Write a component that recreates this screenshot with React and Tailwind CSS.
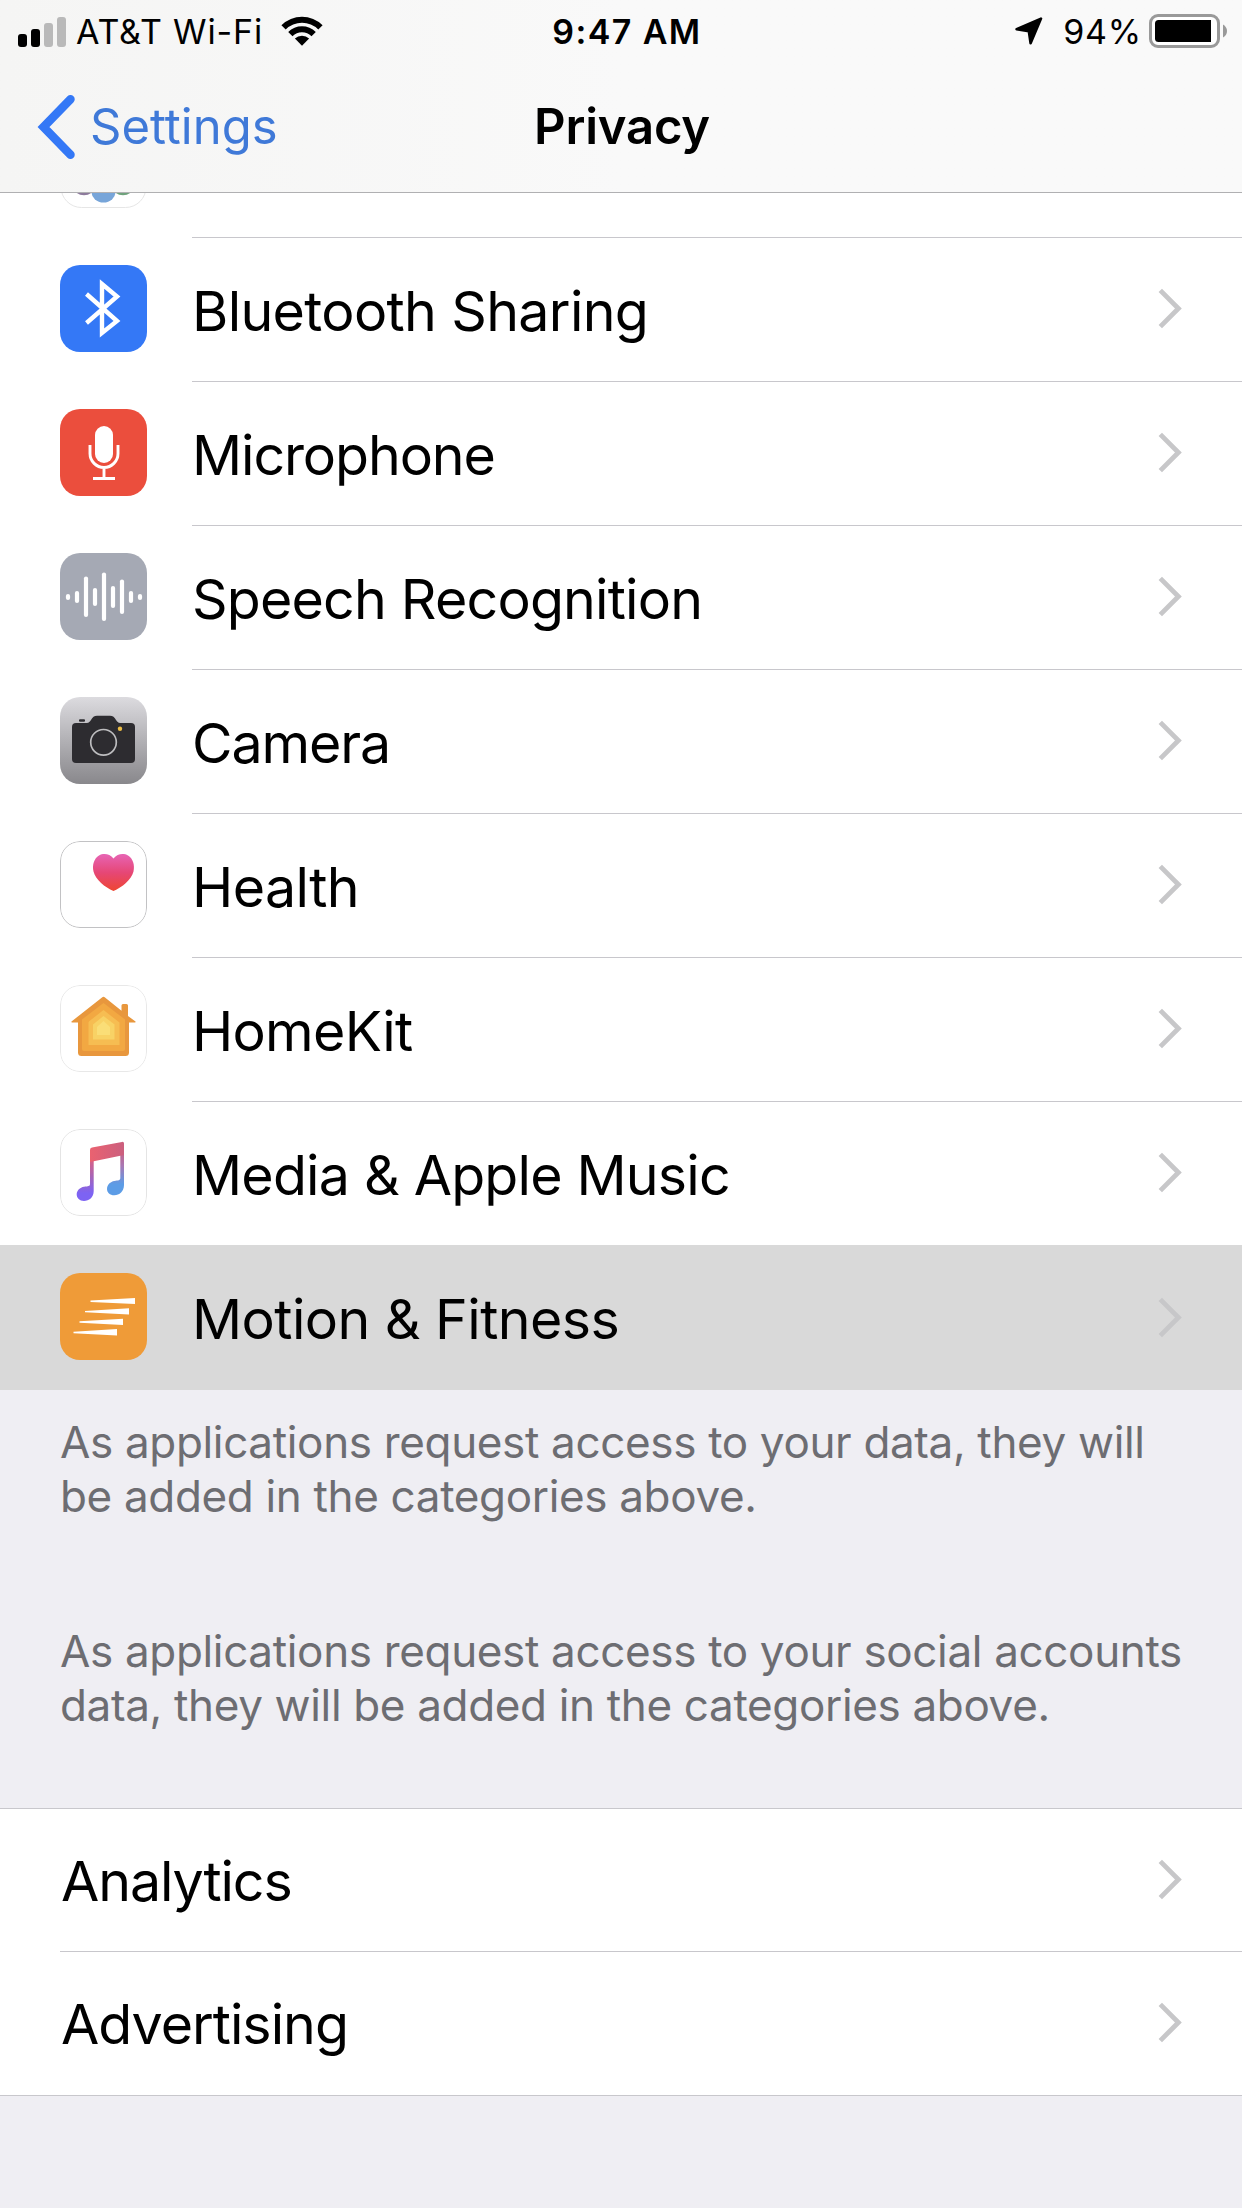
function SignalIcon() {
  return (
    <svg width="48" height="32" viewBox="0 0 48 32" className="shrink-0">
      <rect x="0" y="18" width="9" height="13" rx="3" fill="#000" />
      <rect x="13" y="13" width="9" height="18" rx="3" fill="#000" />
      <rect x="26" y="7" width="9" height="24" rx="3" fill="#b9b9b9" />
      <rect x="39" y="1" width="9" height="30" rx="3" fill="#b9b9b9" />
    </svg>
  );
}

function WifiIcon() {
  return (
    <svg width="42" height="30" viewBox="0 0 42 30" className="shrink-0">
      <path d="M0.4 9.2 A29.4 29.4 0 0 1 41.6 9.2 L37.3 13.4 A23.4 23.4 0 0 0 4.7 13.4 Z" />
      <path d="M7.2 16 A19.6 19.6 0 0 1 34.8 16 L30.5 20.2 A13.6 13.6 0 0 0 11.5 20.2 Z" />
      <path d="M13.9 22.6 A10.2 10.2 0 0 1 28.1 22.6 L21 29.8 Z" />
    </svg>
  );
}

function LocationIcon() {
  return (
    <svg width="28" height="28" viewBox="0 0 28 28" className="shrink-0">
      <path
        d="M26 1.6 L1.6 12.2 L13.8 14.1 L15.6 26.2 Z"
        fill="#000"
        stroke="#000"
        strokeWidth="2.6"
        strokeLinejoin="round"
      />
    </svg>
  );
}

function BatteryIcon() {
  return (
    <svg width="79" height="34" viewBox="0 0 79 34" className="shrink-0">
      <rect x="1.5" y="1.5" width="68" height="31" rx="7.5" fill="#fff" stroke="#999" strokeWidth="3" />
      <path d="M9.5 6 H62 V28 H9.5 A3.5 3.5 0 0 1 6 24.5 V9.500 A3.500 3.500 0 0 1 9.500 6 Z" />
      <path d="M74 10.500 Q78 13 78 17 Q78 21 74 23.500 Z" fill="#999" />
    </svg>
  );
}

function Chevron({ color }) {
  return (
    <svg width="25" height="41" viewBox="0 0 25 41" className="mr-[59px] mb-0.5 shrink-0">
      <path d="M2.300 2.400 L20.400 20.500 L2.300 38.600" fill="none" stroke={color} strokeWidth="4.800" />
    </svg>
  );
}

function Tile({ children, className }) {
  return (
    <div className={"mt-[27px] ml-[60px] size-[87px] shrink-0 self-start overflow-hidden rounded-[20px] " + className}>
      <svg width="87" height="87" viewBox="0 0 87 87">
        {children}
      </svg>
    </div>
  );
}

function PhotosPeek() {
  return (
    <svg width="87" height="16" viewBox="0 0 87 16">
      <path d="M1 -6 A20.500 20.500 0 0 0 21.500 14.500 H65.500 A20.500 20.500 0 0 0 86 -6" fill="#fff" stroke="#e6e6e6" />
      <circle cx="24" cy="-10" r="12.300" fill="#8d7a9c" />
      <circle cx="63" cy="-10" r="12.300" fill="#6fa27c" />
      <path d="M31.500 -4 V-1 A12 10.500 0 0 0 55.500 -1 V-4 Z" fill="#77a5d9" />
    </svg>
  );
}

function BluetoothTile() {
  return (
    <Tile className="bg-[#3478f6]">
      <path
        d="M26.500 29 L57 56 L42 68 V19 L57 31.500 L26.500 58"
        fill="none"
        stroke="#fff"
        strokeWidth="4.400"
        strokeMiterlimit="8"
      />
    </Tile>
  );
}

function MicrophoneTile() {
  return (
    <Tile className="bg-[#eb4e3d]">
      <rect x="35" y="17" width="18" height="37" rx="9" fill="#fff" />
      <path d="M30 36 V44.500 A14 14 0 0 0 58 44.500 V36 M44 58.500 V69.500" fill="none" stroke="#fff" strokeWidth="2.900" />
      <rect x="33" y="68" width="22" height="3" fill="#fff" />
    </Tile>
  );
}

const WAVE_BARS = [
  [8, 41, 47],
  [17, 38, 50],
  [26, 23.5, 64],
  [35, 35, 53],
  [44, 19.5, 68],
  [53, 33, 55],
  [62, 26.5, 61],
  [71, 38, 50],
  [80, 41, 47],
];

function SpeechTile() {
  return (
    <Tile className="bg-[#a5a9b4]">
      {WAVE_BARS.map(([x, top, bottom]) => (
        <rect key={x} x={x - 2.1} y={top} width="4.200" height={bottom - top} rx="2.100" fill="#fff" />
      ))}
    </Tile>
  );
}

function CameraTile() {
  return (
    <Tile className="bg-linear-to-b from-[#dcdbdf] to-[#89888c]">
      <rect x="12" y="26" width="63" height="40" rx="4" fill="#2d2c30" />
      <path
        d="M25 26.500 Q29.500 26 31 23 Q33 18.700 37 18.700 H50 Q54 18.700 56 23 Q57.500 26 62 26.500 V30 H25 Z"
        fill="#2d2c30"
      />
      <rect x="19" y="22.200" width="6" height="2.600" rx="1" fill="#2d2c30" />
      <circle cx="43.500" cy="45.300" r="12.800" fill="none" stroke="#bdbdbf" strokeWidth="1.700" />
      <circle cx="60" cy="31.800" r="2.200" fill="#edbd45" />
    </Tile>
  );
}

function HealthTile() {
  return (
    <Tile className="bg-white">
      <defs>
        <linearGradient id="heart" x1="0" y1="0" x2="0" y2="1">
          <stop offset="0" stopColor="#e764b4" />
          <stop offset="0.500" stopColor="#e64776" />
          <stop offset="1" stopColor="#ee4632" />
        </linearGradient>
      </defs>
      <rect x="0.500" y="0.500" width="86" height="86" rx="19.500" fill="none" stroke="#c2c2c4" />
      <path
        d="M53.500 17.500 C57.500 12.300 64 12.300 68 14.500 C73 17.500 75 24 73.500 30.500 C71.500 38.500 62 46.500 53.500 50 C45 46.500 35.500 38.500 33.500 30.500 C32 24 34 17.500 39 14.500 C43 12.300 49.500 12.300 53.500 17.500 Z"
        fill="url(#heart)"
      />
    </Tile>
  );
}

function HomeTile() {
  return (
    <Tile className="bg-white">
      <rect x="0.500" y="0.500" width="86" height="86" rx="19.500" fill="none" stroke="#e8e8e8" />
      <path
        d="M43.500 11.700 Q44.300 11.700 45 12.500 L61.500 25.800 V20.500 Q61.500 19 63 19 H66.500 Q68 19 68 20.500 V31 L75.500 36.500 Q76 37.500 75 37.500 H69 V67.500 Q69 71 65.500 71 H21.500 Q18 71 18 67.500 V37.500 H12 Q11 37.500 11.500 36.500 L42 12.500 Q42.700 11.700 43.500 11.700 Z"
        fill="#e8973d"
      />
      <path d="M43.500 18 L65 34.500 V64 Q65 66 63 66 H24 Q22 66 22 64 V34.500 Z" fill="#f2a842" />
      <path d="M43.500 25 L59.500 37.500 V60 H28.500 V37.500 Q28.500 36.500 29.500 36 Z" fill="#f6bd52" />
      <path d="M43.500 31 L54.500 39.500 V54.500 H33 V39.500 Z" fill="#f8d265" />
      <path d="M43.500 36 L50 42 V50 H37 V42 Z" fill="#fade77" />
    </Tile>
  );
}

function MusicTile() {
  return (
    <Tile className="bg-white">
      <defs>
        <linearGradient id="noteLeft" x1="0" y1="19" x2="0" y2="72" gradientUnits="userSpaceOnUse">
          <stop offset="0.150" stopColor="#e4607a" />
          <stop offset="0.550" stopColor="#a565b8" />
          <stop offset="0.850" stopColor="#7d63f3" />
        </linearGradient>
        <linearGradient id="noteRight" x1="0" y1="13" x2="0" y2="66" gradientUnits="userSpaceOnUse">
          <stop offset="0.150" stopColor="#c95f80" />
          <stop offset="0.450" stopColor="#a878b4" />
          <stop offset="0.800" stopColor="#5c9ce6" />
        </linearGradient>
        <linearGradient id="beam" x1="0" y1="0" x2="1" y2="0">
          <stop offset="0" stopColor="#ea6270" />
          <stop offset="1" stopColor="#cb5f7e" />
        </linearGradient>
      </defs>
      <rect x="0.500" y="0.500" width="86" height="86" rx="19.500" fill="none" stroke="#e4e4e4" />
      <path
        d="M30 21 H33.700 V62 C33.700 68.500 29 72 24 72 C19.500 72 16.700 69 16.700 65.500 C16.700 61.500 20 58.500 24 57.800 C28 57.200 30 57.500 30 55 Z"
        fill="url(#noteLeft)"
      />
      <path
        d="M60.300 15 H64 V56 C64 62.500 59.500 66.300 54.300 66.300 C49.800 66.300 47 63.500 47 60 C47 55.500 50.500 52.700 54.300 52 C58.300 51.300 60.300 51.500 60.300 49 Z"
        fill="url(#noteRight)"
      />
      <path d="M30 21 Q30 19 32 18.600 L62 12.900 Q64 12.500 64 14.500 V26 L33.700 32.300 L30 33 Z" fill="url(#beam)" />
    </Tile>
  );
}

function MotionTile() {
  return (
    <Tile className="bg-[#ef9b38]">
      <g fill="#fff">
        <path d="M30.500 27.500 L75 25 V31 L30.500 29 Z" />
        <path d="M25 38 L69 35.300 V41.500 L25 39.300 Z" />
        <path d="M19.500 48.300 L63 45.700 V52 L19.500 49.800 Z" />
        <path d="M13.500 58.700 L57 56 V62.500 L13.500 60.200 Z" />
      </g>
    </Tile>
  );
}

const PERMISSIONS = [
  { label: "Bluetooth Sharing", Icon: BluetoothTile, tracking: "tracking-[-0.65px]" },
  { label: "Microphone", Icon: MicrophoneTile, tracking: "tracking-[-1.1px]" },
  { label: "Speech Recognition", Icon: SpeechTile, tracking: "tracking-[-0.8px]" },
  { label: "Camera", Icon: CameraTile, tracking: "tracking-[-1.1px]" },
  { label: "Health", Icon: HealthTile, tracking: "tracking-[-0.6px]" },
  { label: "HomeKit", Icon: HomeTile, tracking: "tracking-[-0.7px]" },
];

function PermissionRow({ label, Icon, tracking, size = "h-[144px]", line = "border-b border-[#c8c7cc]", fill = "bg-white", chevron = "#c7c7c9" }) {
  return (
    <div className={"flex " + size + " " + fill}>
      <Icon />
      <div className={"ml-[45px] flex flex-1 items-center " + line}>
        <span className={"flex-1 pt-0.5 text-[55.5px] leading-none whitespace-nowrap " + tracking}>{label}</span>
        <Chevron color={chevron} />
      </div>
    </div>
  );
}

function PlainRow({ label, tracking, line }) {
  return (
    <div className={"ml-[60px] flex h-[143px] items-center " + line}>
      <span className={"flex-1 pt-px pl-px text-[55.5px] leading-none " + tracking}>{label}</span>
      <Chevron color="#c7c7c9" />
    </div>
  );
}

export default function App() {
  return (
    <div className="flex h-[2208px] w-[1242px] flex-col overflow-hidden bg-[#efeef3] font-[Inter,sans-serif] text-black">
      <header className="h-[193px] shrink-0 border-b border-[#b0b0b2] bg-linear-to-r from-[#f5f5f4] to-[#f9f9f9] to-50%">
        <div className="grid h-[63px] grid-cols-3 items-center text-[34px] leading-none">
          <div className="flex items-center pl-[18px]">
            <SignalIcon />
            <span className="ml-[10px] tracking-[0.85px] whitespace-nowrap">AT&amp;T Wi-Fi</span>
            <span className="ml-[18px] pb-0.5">
              <WifiIcon />
            </span>
          </div>
          <div className="pl-3 text-center font-semibold tracking-[1.4px]">9:47 AM</div>
          <div className="flex items-center justify-end pr-[14px]">
            <span className="pb-0.5">
              <LocationIcon />
            </span>
            <span className="ml-[20px] tracking-[0.8px]">94%</span>
            <span className="ml-[7px] pb-0.5">
              <BatteryIcon />
            </span>
          </div>
        </div>
        <div className="grid h-[127px] grid-cols-3 items-center text-[49px] leading-none">
          <div className="flex items-center pl-[36px] text-[#3f79d8]">
            <svg width="41" height="66" viewBox="0 0 41 66" className="shrink-0">
              <path
                d="M34.500 5.300 L7.500 33 L34.500 60.700"
                fill="none"
                stroke="#3478f6"
                strokeWidth="8.500"
                strokeLinecap="round"
              />
            </svg>
            <span className="ml-[13px]">Settings</span>
          </div>
          <h1 className="pl-0.5 text-center font-semibold tracking-[-0.2px]">Privacy</h1>
        </div>
      </header>

      <main>
        <section>
          <div className="flex h-[45px] bg-white">
            <div className="ml-[60px]">
              <PhotosPeek />
            </div>
            <div className="ml-[45px] flex-1 border-b border-[#c8c7cc]" />
          </div>
          {PERMISSIONS.map((item) => (
            <PermissionRow key={item.label} {...item} />
          ))}
          <PermissionRow
            label="Media &amp; Apple Music"
            Icon={MusicTile}
            tracking="tracking-[-0.8px]"
            size="h-[143px]"
            line=""
          />
          <PermissionRow
            label="Motion &amp; Fitness"
            Icon={MotionTile}
            tracking="tracking-[-0.55px]"
            size="h-[145px] pt-px"
            line=""
            fill="bg-[#d9d9d9]"
            chevron="#c7c7c9"
          />
        </section>

        <div className="px-[60px] pt-[25px] text-[44px] leading-[54px] tracking-[-0.34px] text-[#6d6d72]">
          <p>
            As applications request access to your data, they will
            <br />
            be added in the categories above.
          </p>
          <p className="mt-[101px] whitespace-nowrap">
            As applications request access to your social accounts
            <br />
            data, they will be added in the categories above.
          </p>
        </div>

        <section className="mt-[76px] h-[288px] border-y border-[#c8c7cc] bg-white">
          <PlainRow label="Analytics" tracking="tracking-[-1.1px]" line="border-b border-[#c8c7cc]" />
          <PlainRow label="Advertising" tracking="tracking-[-1px]" line="" />
        </section>
      </main>
    </div>
  );
}
